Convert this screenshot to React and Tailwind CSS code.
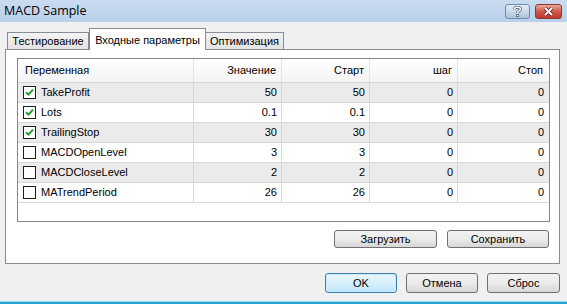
import React from "react";

const rows = [
  { name: "TakeProfit", on: true, value: "50", start: "50", step: "0", stop: "0" },
  { name: "Lots", on: true, value: "0.1", start: "0.1", step: "0", stop: "0" },
  { name: "TrailingStop", on: true, value: "30", start: "30", step: "0", stop: "0" },
  { name: "MACDOpenLevel", on: false, value: "3", start: "3", step: "0", stop: "0" },
  { name: "MACDCloseLevel", on: false, value: "2", start: "2", step: "0", stop: "0" },
  { name: "MATrendPeriod", on: false, value: "26", start: "26", step: "0", stop: "0" },
];

const cols = "grid grid-cols-[176px_88px_88px_88px_91px]";

function Check({ on }) {
  return (
    <div className="w-[13px] h-[13px] border border-[#1e1e1e] bg-white flex items-center justify-center shrink-0">
      {on && (
        <svg width="9" height="9" viewBox="0 0 9 9">
          <path d="M1 4.2 L3.4 6.6 L8 1.6" fill="none" stroke="#1f9e2a" strokeWidth="2" />
        </svg>
      )}
    </div>
  );
}

function Btn({ children, className = "" }) {
  return (
    <div
      className={
        "flex items-center justify-center rounded-[3px] border bg-gradient-to-b text-[11px] text-black " +
        className
      }
    >
      {children}
    </div>
  );
}

const plain = "border-[#707070] from-[#f2f2f2] via-[#ebebeb] to-[#d6d6d6]";

export default function App() {
  return (
    <div className="w-[567px] h-[304px] bg-[#f0f0f0] flex flex-col overflow-hidden" style={{ fontFamily: '"Liberation Sans", Arial, sans-serif' }}>
      {/* title bar */}
      <div className="h-[22px] bg-gradient-to-b from-[#c9dcf0] to-[#b9d0ea] flex items-center pl-[4px] pr-[5px]">
        <span className="text-[12.5px] text-black" style={{ fontFamily: '"Open Sans", "Noto Sans", sans-serif' }}>MACD Sample</span>
        <div className="ml-auto flex gap-[5px] items-center">
          <div className="w-[25px] h-[15px] rounded-[3px] border border-[#6d8bab] bg-gradient-to-b from-[#e4eef8] via-[#c9d9ea] to-[#aec4dc] flex items-center justify-center">
            <svg width="9" height="11" viewBox="0 0 9 11">
              <path d="M1.5 3.2 C1.5 0.6 7.5 0.6 7.5 3.2 C7.5 5 4.5 5 4.5 7" fill="none" stroke="#4a5a6e" strokeWidth="3" />
              <path d="M1.5 3.2 C1.5 0.6 7.5 0.6 7.5 3.2 C7.5 5 4.5 5 4.5 7" fill="none" stroke="#fff" strokeWidth="1.5" />
              <rect x="3" y="8" width="3" height="3" fill="#4a5a6e" />
              <rect x="3.7" y="8.7" width="1.6" height="1.6" fill="#fff" />
            </svg>
          </div>
          <div className="w-[27px] h-[15px] rounded-[3px] border border-[#8a3a2e] bg-gradient-to-b from-[#e9a99a] via-[#d0574a] to-[#c0392b] flex items-center justify-center">
            <svg width="11" height="9" viewBox="0 0 11 9">
              <path d="M2 1 L9 8 M9 1 L2 8" stroke="#5a1d16" strokeWidth="3.4" />
              <path d="M2 1 L9 8 M9 1 L2 8" stroke="#fff" strokeWidth="2" />
            </svg>
          </div>
        </div>
      </div>

      {/* tabs */}
      <div className="pl-[5px] pr-[7px] mt-[6px]">
        <div className="flex h-[21px] items-end pl-[2px] relative z-10">
          <div className="h-[17px] w-[82px] border border-b-0 border-[#898c95] bg-gradient-to-b from-[#f3f3f3] to-[#e3e3e3] flex items-center justify-center text-[11px] text-black">Тестирование</div>
          <div className="h-[22px] w-[117px] -mb-[1px] border border-b-0 border-[#898c95] bg-white flex items-start pt-[3px] justify-center text-[11px] text-black">Входные параметры</div>
          <div className="h-[17px] w-[78px] border border-b-0 border-l-0 border-[#898c95] bg-gradient-to-b from-[#f3f3f3] to-[#e3e3e3] flex items-center justify-center text-[11px] text-black">Оптимизация</div>
        </div>

        {/* panel */}
        <div className="border border-[#898c95] bg-white pl-[11px] pr-[9px] pt-[8px] pb-[15px]">
          <div className="h-[164px] border border-[#828790] bg-white text-[11px] text-black">
            <div className={cols + " h-[24px] border-b border-[#d5d5d5] bg-gradient-to-b from-white to-[#f4f4f4]"}>
              <div className="flex items-center pl-[7px] border-r border-[#e5e5e5]">Переменная</div>
              <div className="flex items-center justify-end pr-[5px] border-r border-[#e5e5e5]">Значение</div>
              <div className="flex items-center justify-end pr-[5px] border-r border-[#e5e5e5]">Старт</div>
              <div className="flex items-center justify-end pr-[5px] border-r border-[#e5e5e5]">шаг</div>
              <div className="flex items-center justify-end pr-[6px]">Стоп</div>
            </div>
            {rows.map((r, i) => (
              <div
                key={r.name}
                className={cols + " h-[20px] border-b border-[#d8d8d8] " + (i % 2 === 0 ? "bg-[#ebebeb]" : "bg-white")}
              >
                <div className="flex items-center gap-[5px] pl-[5px] border-r border-[#d8d8d8]">
                  <Check on={r.on} />
                  <span>{r.name}</span>
                </div>
                <div className="flex items-center justify-end pr-[4px] border-r border-[#d8d8d8]">{r.value}</div>
                <div className="flex items-center justify-end pr-[4px] border-r border-[#d8d8d8]">{r.start}</div>
                <div className="flex items-center justify-end pr-[4px] border-r border-[#d8d8d8]">{r.step}</div>
                <div className="flex items-center justify-end pr-[5px]">{r.stop}</div>
              </div>
            ))}
          </div>
          <div className="flex justify-end gap-[10px] mt-[8px] pr-[1px]">
            <Btn className={"w-[103px] h-[18px] " + plain}>Загрузить</Btn>
            <Btn className={"w-[102px] h-[18px] " + plain}>Сохранить</Btn>
          </div>
        </div>

        {/* dialog buttons */}
        <div className="flex justify-end gap-[9px] mt-[9px]">
          <Btn className="w-[72px] h-[20px] border-[#3c7fb1] from-[#eaf6fd] via-[#d9f0fc] to-[#bee6fd] shadow-[inset_0_0_0_1px_#c8ecfc]">OK</Btn>
          <Btn className={"w-[72px] h-[20px] " + plain}>Отмена</Btn>
          <Btn className={"w-[73px] h-[20px] " + plain}>Сброс</Btn>
        </div>
      </div>

      <div className="mt-auto h-[3px] border-t border-[#8fdcf2] bg-[#28a5d2]" />
    </div>
  );
}
